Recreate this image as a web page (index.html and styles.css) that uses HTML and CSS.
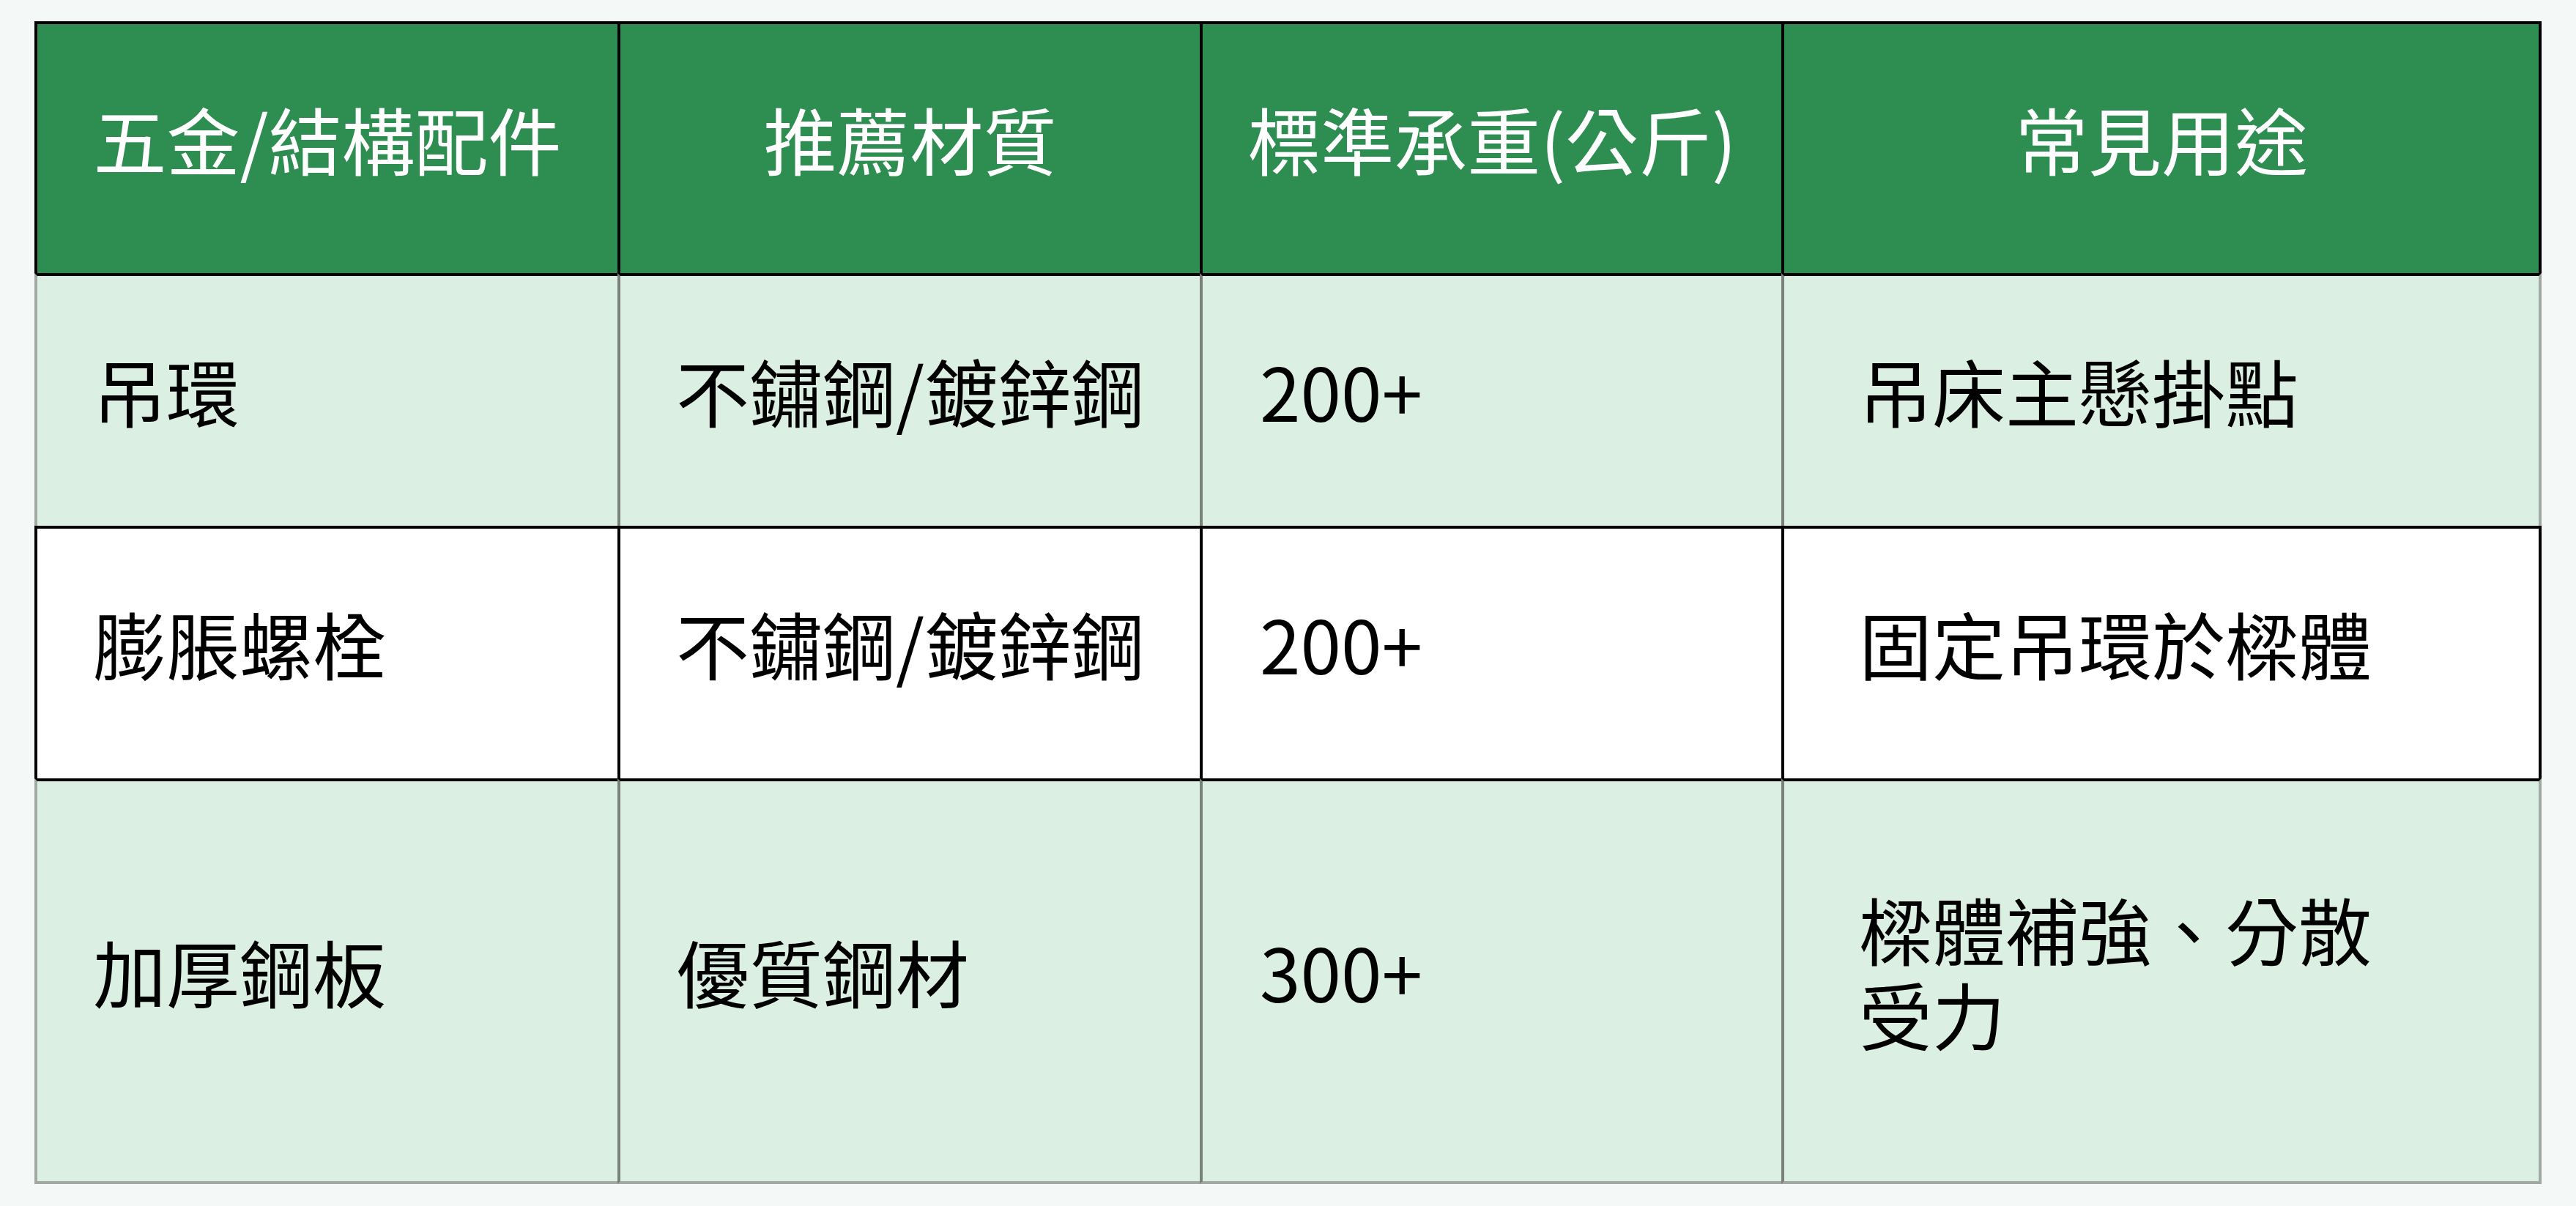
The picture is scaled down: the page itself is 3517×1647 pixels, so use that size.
FILE: index.html
```html
<!DOCTYPE html>
<html lang="zh-Hant">
<head>
<meta charset="utf-8">
<title>五金配件表</title>
<link rel="stylesheet" href="styles.css">
</head>
<body>
<main class="page">
  <table class="spec-table">
    <colgroup>
      <col class="c1"><col class="c2"><col class="c3"><col class="c4">
    </colgroup>
    <thead>
      <tr class="row-head">
        <th>五金/結構配件</th>
        <th>推薦材質</th>
        <th>標準承重(公斤)</th>
        <th>常見用途</th>
      </tr>
    </thead>
    <tbody>
      <tr class="row-tint row-1">
        <td>吊環</td>
        <td>不鏽鋼/鍍鋅鋼</td>
        <td>200+</td>
        <td>吊床主懸掛點</td>
      </tr>
      <tr class="row-plain row-2">
        <td>膨脹螺栓</td>
        <td>不鏽鋼/鍍鋅鋼</td>
        <td>200+</td>
        <td>固定吊環於樑體</td>
      </tr>
      <tr class="row-tint row-3">
        <td>加厚鋼板</td>
        <td>優質鋼材</td>
        <td>300+</td>
        <td>樑體補強、分散受力</td>
      </tr>
    </tbody>
  </table>
</main>
</body>
</html>
```

FILE: styles.css
```css
html, body {
  margin: 0;
  padding: 0;
  background: #f4f8f7;
}

.page {
  padding: 29px 0 0 47px;
}

.spec-table {
  table-layout: fixed;
  width: 3423px;
  border-collapse: separate;
  border-spacing: 0;
  font-family: "Noto Sans CJK TC", "Noto Sans", sans-serif;
  font-size: 100px;
  line-height: 116px;
  color: #000;
}

.c1 { width: 796px; }
.c2 { width: 795px; }
.c3 { width: 794px; }
.c4 { width: 1038px; }

.spec-table th,
.spec-table td {
  padding: 0 0 29px 76px;
  vertical-align: middle;
  border-top: 4px solid #000;
  border-left: 4px solid #000;
  text-align: left;
  font-weight: 400;
}

.spec-table td:nth-child(3) {
  padding-left: 78px;
}

.spec-table th:last-child,
.spec-table td:last-child {
  border-right: 4px solid #000;
  padding-left: 102px;
  padding-right: 180px;
}

/* header */
.row-head { height: 344px; }
.row-head th {
  background: #2e8d50;
  color: #fff;
  text-align: center;
  padding: 0 0 29px 0;
}
.row-head th:last-child {
  padding: 0 0 29px 0;
}

/* tinted rows */
.row-tint td {
  background: #dbefe3;
  border-left-color: #7a807c;
}
.row-tint td:first-child {
  border-left-color: #a2a9a5;
}
.row-tint td:last-child {
  border-right-color: #a2a9a5;
}

/* plain rows */
.row-plain td {
  background: #fff;
}

.row-1 { height: 345px; }
.row-2 { height: 345px; }
.row-3 { height: 554px; }

.row-3 td {
  border-bottom: 4px solid #a2a9a5;
}
```
